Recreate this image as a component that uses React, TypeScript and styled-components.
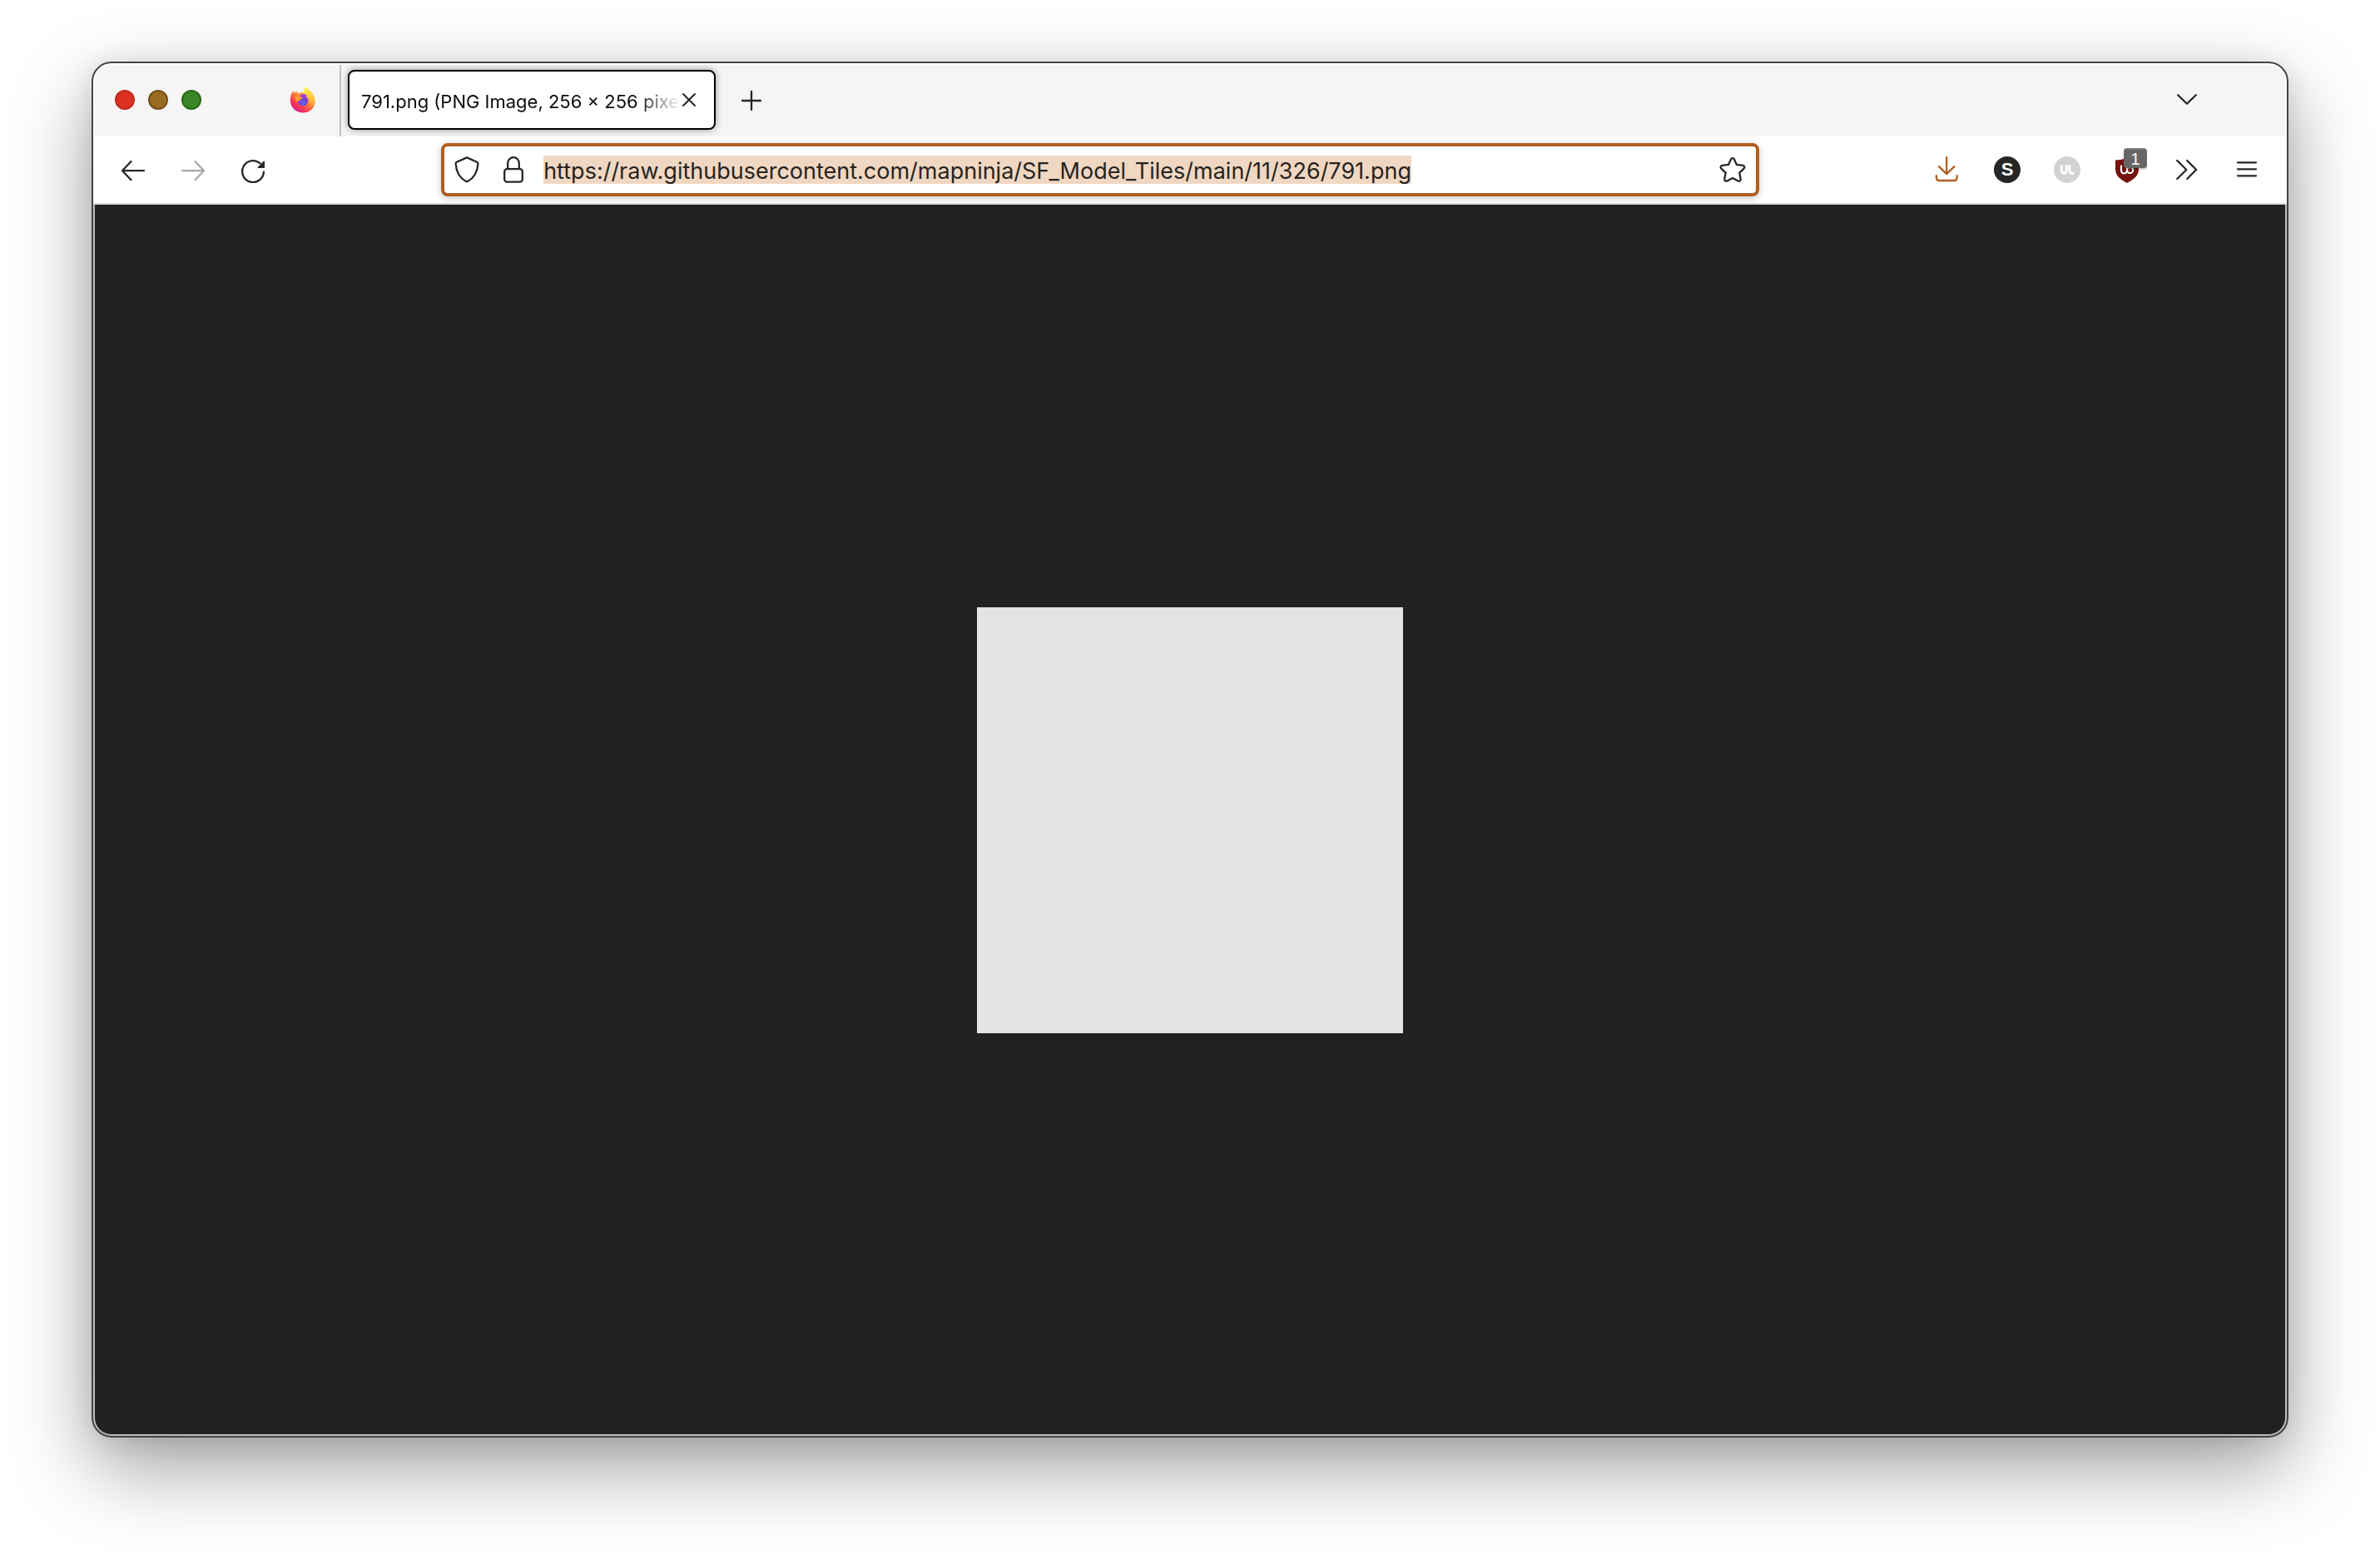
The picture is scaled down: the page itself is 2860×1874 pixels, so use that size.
import React from "react";
import styled, { createGlobalStyle, css } from "styled-components";

const ink = "#262626";
const accent = "#b05e20";

const GlobalStyle = createGlobalStyle`
  *, *::before, *::after { box-sizing: border-box; }
  html, body, #root { height: 100%; }
  body {
    margin: 0;
    background: #fff;
    color: #0c0c0d;
    font-family: Inter, "Liberation Sans", sans-serif;
  }
`;

const Desktop = styled.div`
  display: flex;
  height: 100%;
  padding: 74px 110px 146px;
`;

const BrowserWindow = styled.main`
  flex: 1;
  min-width: 0;
  display: flex;
  padding: 2px;
  border: 2px solid #444;
  border-radius: 24px;
  background: linear-gradient(#fff 168px, #bcbcbc 170px);
  box-shadow: 0 36px 96px rgba(0, 0, 0, 0.38), 0 4px 30px rgba(0, 0, 0, 0.1);
`;

const Frame = styled.div`
  flex: 1;
  min-width: 0;
  display: flex;
  flex-direction: column;
  overflow: hidden;
  border-radius: 20px;
`;

const TabBar = styled.header`
  display: flex;
  align-items: center;
  height: 86px;
  padding: 0 10px 2px 0;
  background: #f5f5f5;
`;

const WindowControls = styled.div`
  display: flex;
  gap: 16px;
  padding-left: 24px;
`;

const Light = styled.button<{ $fill: string; $edge: string }>`
  width: 24px;
  height: 24px;
  padding: 0;
  border: 2px solid ${(p) => p.$edge};
  border-radius: 50%;
  background: ${(p) => p.$fill};
`;

const PinnedTab = styled.button`
  display: flex;
  align-items: center;
  justify-content: flex-end;
  align-self: stretch;
  width: 168px;
  margin: 0 0 -2px;
  padding: 0 28px 2px 0;
  border: 0;
  border-right: 2px solid #c2c2c2;
  background: none;
`;

const Tab = styled.div`
  display: flex;
  align-items: center;
  width: 442px;
  height: 72px;
  margin-left: 8px;
  padding: 0 14px;
  border: 2px solid #000;
  border-radius: 8px;
  background: #fff;
  box-shadow: 0 0 8px rgba(0, 0, 0, 0.4);
`;

const TabTitle = styled.span`
  flex: 1;
  min-width: 0;
  margin-right: -6px;
  padding-top: 3px;
  overflow: hidden;
  white-space: nowrap;
  font-size: 22px;
  line-height: 32px;
  mask-image: linear-gradient(to left, transparent, #000 52px);
`;

const IconButton = styled.button<{ $size?: "tab" | "tool" | "small" }>`
  display: flex;
  align-items: center;
  justify-content: center;
  flex: none;
  padding: 0;
  border: 0;
  background: none;
  color: ${ink};
  ${(p) =>
    p.$size === "small"
      ? css`width: 32px; height: 32px;`
      : css`width: 72px; height: 64px;`}
  &:disabled { color: #a8a8a8; }
`;

const Push = styled.div`
  flex: 1;
`;

const TabListSlot = styled.div`
  display: flex;
  padding-right: 72px;
`;

const NewTabSlot = styled.div`
  display: flex;
  padding-left: 7px;
`;

const Toolbar = styled.nav`
  display: flex;
  align-items: center;
  height: 82px;
  padding: 0 10px;
  border-bottom: 2px solid #dcdcdc;
  background: #fff;
`;

const Spring = styled.div`
  flex: 6 1 0;
`;

const AddressBar = styled.form`
  flex: 49 1 0;
  min-width: 0;
  display: flex;
  align-items: center;
  height: 64px;
  padding: 0 12px 0 11px;
  border: 4px solid ${accent};
  border-radius: 8px;
  background: #fff;
  box-shadow: 0 2px 8px rgba(0, 0, 0, 0.22);
`;

const IdentityIcons = styled.div`
  display: flex;
  gap: 24px;
  padding-right: 20px;
`;

const Address = styled.input`
  field-sizing: content;
  height: 34px;
  padding: 2px 0 0;
  border: 0;
  outline: 0;
  background: #f0d7c2;
  color: #262420;
  font-family: inherit;
  font-size: 27px;
  line-height: 32px;
`;

const Svg = styled.svg<{ $color?: string; $weight?: number }>`
  display: block;
  width: 32px;
  height: 32px;
  color: ${(p) => p.$color ?? "inherit"};
  fill: none;
  stroke: currentColor;
  stroke-width: ${(p) => p.$weight ?? 2.3};
  stroke-linecap: round;
  stroke-linejoin: round;
`;

const Monogram = styled.span`
  display: block;
  width: 32px;
  height: 32px;
  border-radius: 50%;
  background: ${ink};
  color: #fff;
  font-size: 22px;
  font-weight: 800;
  line-height: 32px;
  text-align: center;
`;

const BadgeHost = styled.span`
  position: relative;
  display: block;
`;

const Badge = styled.span`
  position: absolute;
  top: -10px;
  left: 12px;
  width: 28px;
  height: 24px;
  border-top: 2px solid #7d7d7d;
  border-radius: 4px;
  background: #666;
  box-shadow: 0 2px 0 rgba(0, 0, 0, 0.2);
  color: #fff;
  font-size: 20px;
  font-weight: 500;
  line-height: 22px;
  text-align: center;
`;

const Viewer = styled.section`
  flex: 1;
  min-height: 0;
  display: flex;
  align-items: center;
  justify-content: center;
  padding-top: 2px;
  background: #222;
`;

const Tile = styled.div`
  width: 512px;
  height: 512px;
  background: #e4e4e4;
`;

const FirefoxLogo = () => (
  <Svg viewBox="0 0 32 32" aria-hidden="true">
    <defs>
      <linearGradient id="flame" x1="0.85" y1="0.1" x2="0.25" y2="0.95">
        <stop offset="0" stopColor="#fff44f" />
        <stop offset="0.3" stopColor="#ffbd3a" />
        <stop offset="0.55" stopColor="#ff7139" />
        <stop offset="0.8" stopColor="#f5365a" />
        <stop offset="1" stopColor="#d3218c" />
      </linearGradient>
      <linearGradient id="tail" x1="0.5" y1="0" x2="0.5" y2="1">
        <stop offset="0" stopColor="#fff44f" />
        <stop offset="0.5" stopColor="#ffc63f" />
        <stop offset="1" stopColor="#ff8a3a" stopOpacity="0.1" />
      </linearGradient>
      <radialGradient id="globe" cx="0.5" cy="0.75" r="0.7">
        <stop offset="0" stopColor="#6f63e8" />
        <stop offset="0.6" stopColor="#6a42cf" />
        <stop offset="1" stopColor="#a538dd" />
      </radialGradient>
    </defs>
    <g stroke="none">
      <path fill="url(#flame)" d="M2.4 8.6C3 6.8 4 5.700 5 5.200c0 1.200.4 2 .9 2.600.8-1 2-1.900 3.400-2.300-.3 1.300 0 2.400.7 3.100 2-1.500 5-2 7.400-1.500-.5-2.600.6-5.300 3.200-7.100.3 2.400 1.900 3.700 4 5.200 1.400 1 2.200 2 2.900 3.400.6.500 1 1 1.300 1.700 1.400 2.800 2 5.200 2 7.200C30.800 25.500 24.300 31.500 16 31.500 7.500 31.500.8 25 .8 16.800c0-3 .5-5.800 1.600-8.200z" />
      <path fill="url(#tail)" d="M17.400 7.100c-.5-2.600.6-5.300 3.200-7.100.3 2.400 1.900 3.700 4 5.200 1.400 1 2.200 2 2.900 3.400 2.300 3.500 2.900 7.400 1.500 11-1.700 4.200-5 6.700-8.500 6.900 3.400-3.400 3.700-7.500 1.700-10.900-1.200-2.100-4.300-4.500-4.800-8.500z" />
      <circle cx="16" cy="17" r="6.300" fill="url(#globe)" />
      <path fill="#a13ddd" d="M12.600 10.200c2.500-2 7-1.900 9 1.700-1-.4-1.800-.4-2.600 0 1.600.8 2.700 2.200 3 3.700-3-3.600-6.500-2.600-9.400-5.400z" />
      <path fill="#ff9a35" d="M5.600 12.900c2-1.700 4.800-1.700 6.800-.5 1.300.5 3 .4 3.400.8-.1 1-1.300 1.700-2.700 2.300-.9.500-.9 1.500-1.900 2.100-1.200.5-2.700.1-3.700-.7 0-1.700-.6-2.900-1.900-4z" />
    </g>
  </Svg>
);

const CloseIcon = () => (
  <Svg viewBox="0 0 32 32" aria-hidden="true" $weight={2}><path d="M9 9l14 14M23 9L9 23" /></Svg>
);
const PlusIcon = () => (
  <Svg viewBox="0 0 32 32" aria-hidden="true"><path d="M16 6v22M5 17h22" /></Svg>
);
const ChevronDownIcon = () => (
  <Svg viewBox="0 0 32 32" aria-hidden="true"><path d="M5.200 10.200L16 20.800 26.800 10.200" /></Svg>
);
const BackIcon = () => (
  <Svg viewBox="0 0 32 32" aria-hidden="true"><path d="M13.500 6L3 17.200l10.500 11M3.500 17.200H29" /></Svg>
);
const ForwardIcon = () => (
  <Svg viewBox="0 0 32 32" aria-hidden="true"><path d="M18.500 6L29 17.200l-10.500 11M28.500 17.200H3" /></Svg>
);
const ReloadIcon = () => (
  <Svg viewBox="0 0 32 32" aria-hidden="true">
    <path d="M24.500 8.400A12.900 12.900 0 1 0 28.900 18.600" />
    <path d="M29.300 6.200v7h-7z" fill="currentColor" strokeWidth="1.400" />
  </Svg>
);
const ShieldIcon = () => (
  <Svg viewBox="0 0 32 32" aria-hidden="true">
    <path d="M16 1.400L28.200 6.800a1.800 1.800 0 0 1 1.200 1.900c-.6 9.800-4.600 17-12.300 21.300a2.200 2.200 0 0 1-2.200 0C7.200 25.700 3.200 18.500 2.600 8.700a1.800 1.800 0 0 1 1.200-1.900z" />
  </Svg>
);
const LockIcon = () => (
  <Svg viewBox="0 0 32 32" aria-hidden="true">
    <rect x="5.200" y="15.200" width="21.600" height="15.400" rx="3" />
    <path d="M9.200 15V8a6.800 6.800 0 0 1 13.600 0v7" />
  </Svg>
);
const StarIcon = () => (
  <Svg viewBox="0 0 32 32" aria-hidden="true">
    <path d="M14.100 3.300c.8-1.700 3-1.700 3.800 0l3 6.600 7.500 1c1.900.3 2.600 2.400 1.200 3.700l-5.300 5 1.400 7.600c.3 1.900-1.600 3.200-3.200 2.300L16 26l-6.500 3.500c-1.600.9-3.500-.4-3.200-2.300l1.400-7.600-5.300-5C1 13.300 1.700 11.200 3.600 10.900l7.500-1z" />
  </Svg>
);
const DownloadIcon = () => (
  <Svg viewBox="0 0 32 32" aria-hidden="true" $color={accent}>
    <path d="M15.200 1.200v20M5.900 12.200l9.300 9 9.300-9M2.900 23.200v2.600a3.200 3.200 0 0 0 3.200 3.200h18.400a3.200 3.200 0 0 0 3.200-3.200v-2.600" />
  </Svg>
);
const TwinHooksIcon = () => (
  <Svg viewBox="0 0 32 32" aria-hidden="true" $weight={2.8}>
    <circle cx="16" cy="16" r="16" fill="#d2d2d2" stroke="none" />
    <path d="M9.200 11.500v4.800q0 4.200 3.400 4.200 2.600 0 2.600-3.200V11.500M18.800 11.500v4q0 5 4.600 5" stroke="#fff" />
  </Svg>
);
const BlockerIcon = () => (
  <Svg viewBox="0 0 32 32" aria-hidden="true" $weight={2.2}>
    <path d="M16 1.500Q9.500 4.500 2 4.500V15c0 9.500 7 13 14 17 7-4 14-7.500 14-17V4.500Q22.500 4.500 16 1.500z" fill="#76120d" stroke="none" />
    <path d="M9 11.500v5.500a3.500 3.500 0 0 0 7 0v-5.500M16 16.500a3.600 3.600 0 1 0 7.200 0 3.600 3.600 0 1 0-7.200 0" stroke="#fff" />
  </Svg>
);
const OverflowIcon = () => (
  <Svg viewBox="0 0 32 32" aria-hidden="true"><path d="M4.200 5L15.400 16 4.200 27M16.200 5l11 11-11 11" /></Svg>
);
const MenuIcon = () => (
  <Svg viewBox="0 0 32 32" aria-hidden="true"><path d="M5 7.300h22M5 15.300h22M5 23.300h22" /></Svg>
);

export default function App() {
  return (
    <>
      <GlobalStyle />
      <Desktop>
        <BrowserWindow>
          <Frame>
            <TabBar>
              <WindowControls>
                <Light aria-label="Close window" $fill="#dc3022" $edge="#c0281c" />
                <Light aria-label="Minimize window" $fill="#986b22" $edge="#7a4c14" />
                <Light aria-label="Zoom window" $fill="#3b8626" $edge="#286a18" />
              </WindowControls>
              <PinnedTab aria-label="Pinned tab"><FirefoxLogo /></PinnedTab>
              <Tab>
                <TabTitle>791.png (PNG Image, 256 × 256 pixels)</TabTitle>
                <IconButton $size="small" aria-label="Close tab"><CloseIcon /></IconButton>
              </Tab>
              <NewTabSlot>
                <IconButton aria-label="New tab"><PlusIcon /></IconButton>
              </NewTabSlot>
              <Push />
              <TabListSlot>
                <IconButton aria-label="List all tabs"><ChevronDownIcon /></IconButton>
              </TabListSlot>
            </TabBar>
            <Toolbar>
              <IconButton aria-label="Back"><BackIcon /></IconButton>
              <IconButton aria-label="Forward" disabled><ForwardIcon /></IconButton>
              <IconButton aria-label="Reload"><ReloadIcon /></IconButton>
              <Spring />
              <AddressBar onSubmit={(e) => e.preventDefault()}>
                <IdentityIcons>
                  <IconButton type="button" $size="small" aria-label="Tracking protection"><ShieldIcon /></IconButton>
                  <IconButton type="button" $size="small" aria-label="Connection secure"><LockIcon /></IconButton>
                </IdentityIcons>
                <Address
                  aria-label="Address"
                  spellCheck={false}
                  defaultValue="https://raw.githubusercontent.com/mapninja/SF_Model_Tiles/main/11/326/791.png"
                />
                <Push />
                <IconButton type="button" $size="small" aria-label="Bookmark this page"><StarIcon /></IconButton>
              </AddressBar>
              <Spring />
              <IconButton aria-label="Downloads"><DownloadIcon /></IconButton>
              <IconButton aria-label="S extension"><Monogram>S</Monogram></IconButton>
              <IconButton aria-label="Reader extension"><TwinHooksIcon /></IconButton>
              <IconButton aria-label="Content blocker">
                <BadgeHost>
                  <BlockerIcon />
                  <Badge>1</Badge>
                </BadgeHost>
              </IconButton>
              <IconButton aria-label="More tools"><OverflowIcon /></IconButton>
              <IconButton aria-label="Menu"><MenuIcon /></IconButton>
            </Toolbar>
            <Viewer>
              <Tile role="img" aria-label="Map tile 791.png" />
            </Viewer>
          </Frame>
        </BrowserWindow>
      </Desktop>
    </>
  );
}
